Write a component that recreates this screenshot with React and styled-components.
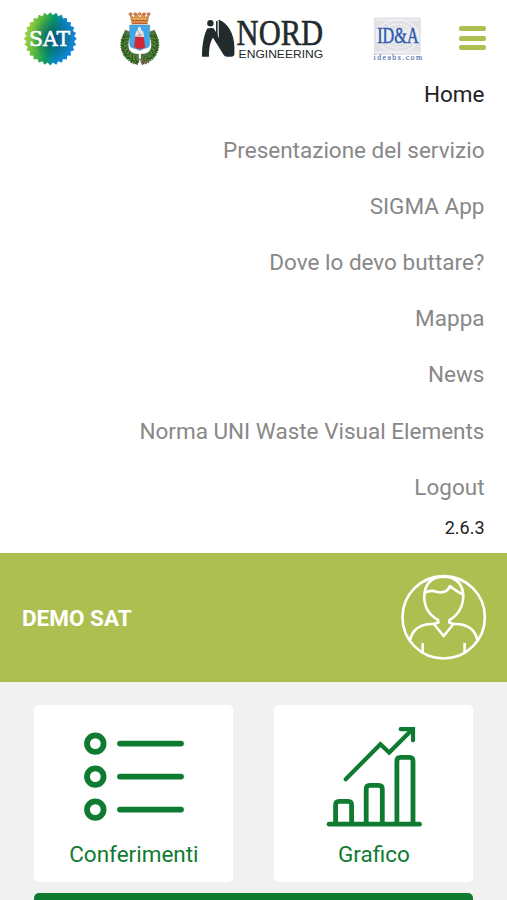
import React from 'react';
import styled, { createGlobalStyle } from 'styled-components';

const GlobalStyle = createGlobalStyle`
  * { box-sizing: border-box; }
  body {
    margin: 0;
    background: #f1f1f1;
    font-family: Roboto, "Liberation Sans", sans-serif;
    overflow: hidden;
  }
  svg { display: block; overflow: visible; }
`;

const Page = styled.div`
  width: 507px;
  height: 900px;
  overflow: hidden;
`;

const Header = styled.header`
  height: 65.5px;
  display: grid;
  grid-template-columns: 97px 79px 173px 88px 27px;
  align-items: start;
  padding: 10px 0 0 22px;
  background: #fff;
`;

const MenuButton = styled.button`
  display: flex;
  flex-direction: column;
  gap: 4.8px;
  width: 27px;
  margin: 16.2px 0 0 0.4px;
  padding: 0;
  border: 0;
  background: none;
`;

const MenuBar = styled.span`
  height: 4.8px;
  border-radius: 2px;
  background: #adbf50;
`;

const Nav = styled.nav`
  height: 487.5px;
  display: flex;
  flex-direction: column;
  align-items: flex-end;
  padding-right: 22.5px;
  background: #fff;
`;

const NavLink = styled.a`
  height: 56.2px;
  line-height: 56.2px;
  font-size: 22.5px;
  white-space: nowrap;
  color: ${(p) => (p.$active ? '#222' : '#888')};
`;

const Version = styled.span`
  line-height: 25px;
  font-size: 18px;
  color: #222;
`;

const Profile = styled.section`
  height: 129px;
  display: flex;
  align-items: center;
  justify-content: space-between;
  padding: 0 20px 0 22px;
  background: #adbf50;
`;

const UserName = styled.h1`
  margin: 0;
  font-size: 22.5px;
  line-height: 28px;
  font-weight: 700;
  color: #fff;
`;

const Content = styled.main`
  padding: 22.7px 34.4px 0;
`;

const Cards = styled.div`
  display: flex;
  justify-content: space-between;
  width: 439px;
`;

const Card = styled.a`
  width: 199px;
  height: 177px;
  display: flex;
  flex-direction: column;
  align-items: center;
  border-radius: 5px;
  padding-top: 15px;
  background: #fff;
`;

const CardLabel = styled.span`
  margin-top: 3px;
  line-height: 28px;
  font-size: 22.5px;
  color: #0f7b30;
`;

const WideButton = styled.div`
  width: 439px;
  height: 80px;
  margin-top: 11.3px;
  border-radius: 5px;
  background: #0f7b30;
`;

const badgePoints = Array.from({ length: 56 }, (_, i) => {
  const r = i % 2 ? 23.9 : 26.6;
  const a = (i * Math.PI) / 28 - Math.PI / 2;
  return `${(50.3 + r * Math.cos(a)).toFixed(2)},${(38.8 + r * Math.sin(a)).toFixed(2)}`;
}).join(' ');

const SatLogo = () => (
  <svg width="56" height="56" viewBox="22 10 56 56">
    <defs>
      <linearGradient id="satBase" x1="0" y1="0.3" x2="1" y2="0.5">
        <stop offset="0" stopColor="#b4d83c" />
        <stop offset="0.3" stopColor="#55b53e" />
        <stop offset="0.52" stopColor="#079a68" />
        <stop offset="0.68" stopColor="#0883c6" />
        <stop offset="1" stopColor="#1688e6" />
      </linearGradient>
      <radialGradient id="satShade" cx="0.56" cy="0.49" r="0.42">
        <stop offset="0" stopColor="#0a4290" stopOpacity="0.9" />
        <stop offset="0.4" stopColor="#07606a" stopOpacity="0.65" />
        <stop offset="1" stopColor="#087060" stopOpacity="0" />
      </radialGradient>
    </defs>
    <polygon points={badgePoints} fill="url(#satBase)" />
    <polygon points={badgePoints} fill="url(#satShade)" />
    <text x="29" y="45.6" textLength="41" lengthAdjust="spacingAndGlyphs" fill="#fff" stroke="#fff" strokeWidth="0.5" fontFamily="'DejaVu Serif', serif" fontSize="19.5">SAT</text>
  </svg>
);

const leaves = Array.from({ length: 16 }, (_, i) => {
  const deg = 84 - i * 7.6;
  const a = (deg * Math.PI) / 180;
  return { dx: 15.6 * Math.cos(a), y: 44.5 + 16 * Math.sin(a), rot: deg };
});

const CrestLogo = () => (
  <svg width="42" height="56" viewBox="119 10 42 56">
    {[1, -1].map((side) => (
      <g key={side} transform={`translate(139.8 0) scale(${side} 1)`}>
        <path d="M1 57.5 C10 57.5 15 53 15 45 C15 39 13 35 11.5 31" fill="none" stroke="#527341" strokeWidth="7" />
        {leaves.map((l, i) => (
          <g key={i} transform={`translate(${l.dx} ${l.y}) rotate(${l.rot})`}>
            <ellipse cx="2" cy="0" rx="2.7" ry="1.1" fill={i % 2 ? '#397524' : '#24591e'} transform="rotate(-35)" />
            <ellipse cx="-2" cy="0" rx="2.5" ry="1.1" fill={i % 2 ? '#2c6120' : '#588541'} transform="rotate(35)" />
          </g>
        ))}
        {[2, 5, 8, 11, 14].map((i) => (
          <circle key={i} cx={leaves[i].dx} cy={leaves[i].y} r="0.7" fill="#a86a45" />
        ))}
        <path d="M0 59 L-7 64 M-1 61 L-3 65 M-7 60 L-9 63" stroke="#8c6256" strokeWidth="1.4" />
      </g>
    ))}
    <path d="M129.7 25 V44.5 Q130 48 135 48.5 L139.7 50.5 L144.3 48.5 Q149.7 48 149.7 44.5 V25 Z" fill="#3fa6e8" stroke="#65869b" strokeWidth="0.5" />
    <path d="M135.5 36 L134 47 Q139.5 50.5 145.3 47.5 L143.5 36 Z" fill="#d22835" />
    <path d="M135.2 36.5 Q135.5 31 138 30 Q137.3 27 139.6 26.5 Q142 28 141 30 Q144 31 144 37 Z" fill="#eee5df" />
    <path d="M138 31 L141 36 M137 35 H142" stroke="#9a8180" strokeWidth="0.7" />
    <path d="M130 14.3 L132 23.8 H147.2 L149 14.3 L145.5 18 L143.8 13 L139.7 18 L136 13 L134 18 Z" fill="#dc9a48" stroke="#a84b23" strokeWidth="0.5" />
    {[130.6, 135.2, 139.7, 144.2, 148.6].map((x) => (
      <ellipse key={x} cx={x} cy="14" rx="1.7" ry="1.3" fill="#d98242" stroke="#a55427" strokeWidth="0.4" />
    ))}
    <path d="M132.3 20.5 H147 M132.3 23.3 H147" stroke="#b94023" strokeWidth="0.8" />
    <path d="M134 19 H135 M137.5 19 H138.5 M141 19 H142 M144.5 19 H145.5" stroke="#f9d879" strokeWidth="1.4" />
  </svg>
);

const NordLogo = () => (
  <svg width="128" height="56" viewBox="198 10 128 56">
    <g fill="#222b2c">
      <circle cx="210.4" cy="23.2" r="3.2" />
      <path d="M207.2 28.4 Q210.4 27.6 213.6 28.3 L217.5 34.5 V44.5 L213 37.5 C209.8 42.5 209 49 208.9 56.7 H202 C202 45 203.8 35 207.2 28.4 Z" />
      <path d="M218.7 19.5 C228 23 234.3 34 234.4 47 V53.8 Q234.4 56.8 231 56.8 H227.2 Q224.6 56.8 223.2 54.2 L213 37.5 L217 35 L218.7 38 Z" />
      <path d="M216 21.5 L217.6 20.5 V38 L216 35 Z" />
      <text x="236.6" y="44.8" textLength="86.5" lengthAdjust="spacingAndGlyphs" fontFamily="'Liberation Serif', serif" fontSize="36.4" stroke="#222b2c" strokeWidth="0.6">NORD</text>
      <text x="238.6" y="57.5" textLength="84.6" lengthAdjust="spacingAndGlyphs" fontFamily="'Liberation Sans', sans-serif" fontSize="10.4">ENGINEERING</text>
    </g>
  </svg>
);

const IdeaLogo = () => (
  <svg width="54" height="56" viewBox="371 10 54 56">
    <rect x="374" y="17.5" width="46.8" height="37.2" fill="#e1e2e6" />
    <g fill="none" stroke="#f6f6f6" strokeWidth="1.1">
      <ellipse cx="397.5" cy="36" rx="21" ry="16" />
      <ellipse cx="397.5" cy="36" rx="15" ry="12" strokeDasharray="2 1" />
      <path d="M375 52.3 H420 M376 20 H419" />
    </g>
    <rect x="376" y="29" width="43" height="14" fill="#f0f1f4" opacity="0.7" />
    <text x="377.2" y="43.4" textLength="41.4" fill="#3159ad" stroke="#3159ad" strokeWidth="0.5" fontFamily="'Liberation Serif', serif" fontSize="23" lengthAdjust="spacingAndGlyphs">ID&amp;A</text>
    <text x="373.5" y="59.5" textLength="48.5" fill="#5b76b3" stroke="#5b76b3" strokeWidth="0.2" fontFamily="'Liberation Serif', serif" fontSize="7.8">ideabs.com</text>
  </svg>
);

const Avatar = () => (
  <svg width="87" height="87" viewBox="400 574 87 87" fill="none" stroke="#fff" strokeWidth="2.6" strokeLinejoin="round">
    <circle cx="443.7" cy="617.3" r="41.2" />
    <path d="M424.6 592.5 Q427 577.2 443.7 576.7 Q460.5 577.2 463 592.5 C464.7 605 458 615.5 449.5 620 L449.2 622.5 L453.5 624 L443.7 636 L433.8 624 L438.5 622.5 L438 620 C428.5 614.5 423 605 424.6 592.5 Z" />
    <path d="M424.6 592.8 Q431 589.4 437 592 Q446.8 594 450 586 Q454.5 590 462.8 594.5" />
    <path d="M410 640.5 C412.5 628 422 623.5 434.5 624 M477.4 640.5 C475 628 465 623.5 453 624" />
    <path d="M422.7 643 V652.2 M464.6 643 V652.2" />
  </svg>
);

const ListIcon = () => (
  <svg width="104" height="117" viewBox="82 720 104 117" fill="none" stroke="#0f7b30" strokeLinecap="round">
    {[743.6, 776.6, 809.6].map((y) => (
      <g key={y}>
        <circle cx="95.3" cy={y} r="8.3" strokeWidth="5.8" />
        <path d={`M120 ${y} H181`} strokeWidth="5.8" />
      </g>
    ))}
  </svg>
);

const ChartIcon = () => (
  <svg width="104" height="117" viewBox="322.3 720 104 117" fill="none" stroke="#0f7b30" strokeWidth="4.8" strokeLinecap="round" strokeLinejoin="round">
    <path d="M329.4 824.2 H419.8" />
    <path d="M335.9 823 V805 Q335.9 801.4 339.5 801.4 H348.3 Q351.9 801.4 351.9 805 V823" />
    <path d="M366.5 823 V789 Q366.5 785.4 370.1 785.4 H379 Q382.6 785.4 382.6 789 V823" />
    <path d="M397.2 823 V761 Q397.2 757.4 400.8 757.4 H409.7 Q413.3 757.4 413.3 761 V823" />
    <path d="M346 779.3 L380.7 744.2 L389.5 752.5 L411.5 730.5" strokeWidth="4.2" strokeLinejoin="miter" />
    <path d="M401 729.2 H413.3 V740.3" strokeWidth="4.2" strokeLinejoin="miter" />
  </svg>
);

const links = [
  'Home',
  'Presentazione del servizio',
  'SIGMA App',
  'Dove lo devo buttare?',
  'Mappa',
  'News',
  'Norma UNI Waste Visual Elements',
  'Logout',
];

export default function App() {
  return (
    <Page>
      <GlobalStyle />
      <Header>
        <SatLogo />
        <CrestLogo />
        <NordLogo />
        <IdeaLogo />
        <MenuButton aria-label="Menu">
          <MenuBar />
          <MenuBar />
          <MenuBar />
        </MenuButton>
      </Header>
      <Nav>
        {links.map((label, i) => (
          <NavLink key={label} $active={i === 0}>{label}</NavLink>
        ))}
        <Version>2.6.3</Version>
      </Nav>
      <Profile>
        <UserName>DEMO SAT</UserName>
        <Avatar />
      </Profile>
      <Content>
        <Cards>
          <Card>
            <ListIcon />
            <CardLabel>Conferimenti</CardLabel>
          </Card>
          <Card>
            <ChartIcon />
            <CardLabel>Grafico</CardLabel>
          </Card>
        </Cards>
        <WideButton />
      </Content>
    </Page>
  );
}
